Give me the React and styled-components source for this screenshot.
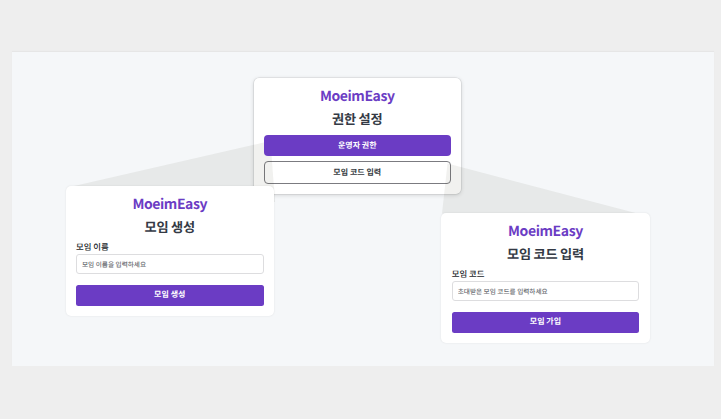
import React from 'react';
import styled, { createGlobalStyle } from 'styled-components';

const GlobalStyle = createGlobalStyle`
  *, *::before, *::after { box-sizing: border-box; }
  body {
    margin: 0;
    background: #eeeeee;
    font-family: "Noto Sans CJK KR", sans-serif;
    color: #343a40;
    text-rendering: geometricPrecision;
  }
`;

const Page = styled.main`
  height: 419px;
  padding: 51.5px 7px 53px 11.5px;
  overflow: hidden;
`;

const Canvas = styled.section`
  position: relative;
  height: 314.5px;
  background: #f5f7f9;
  box-shadow: 0 -1px 1px rgba(0, 0, 0, 0.03);
`;

const Card = styled.article`
  position: absolute;
  left: ${(p) => p.$x}px;
  top: ${(p) => p.$y}px;
  width: ${(p) => p.$w || 208.5}px;
  height: ${(p) => p.$h}px;
  display: flex;
  flex-direction: column;
  padding: 8px 10.5px 0;
  background: #fff;
  border-radius: 5px;
  box-shadow: ${(p) =>
    p.$raised
      ? '0 0 0 0.6px rgba(0, 0, 0, 0.1), 0 1px 4px rgba(0, 0, 0, 0.16)'
      : '0 0 2px rgba(0, 0, 0, 0.1)'};
`;

const Brand = styled.h1`
  margin: 0;
  text-align: center;
  font-size: 14px;
  font-weight: 700;
  line-height: 21px;
  letter-spacing: -0.42px;
  color: #6b3cc4;
`;

const Title = styled.h2`
  margin: 0;
  text-align: center;
  font-size: 13.2px;
  font-weight: 700;
  line-height: 24px;
  letter-spacing: -0.25px;
  color: #343a45;
`;

const Button = styled.button`
  position: relative;
  z-index: ${(p) => (p.$outline ? 0 : 2)};
  flex: none;
  height: ${(p) => (p.$outline ? 23 : 21)}px;
  margin: ${(p) => p.$gap}px 0 0;
  padding: 0;
  border: ${(p) => (p.$outline ? '1px solid #7b7b80' : '0')};
  border-radius: ${(p) => p.$radius || 2.5}px;
  background: ${(p) => (p.$outline ? 'transparent' : '#6b3cc4')};
  color: ${(p) => (p.$outline ? '#343a40' : '#fff')};
  font: 700 8px/18px "Noto Sans CJK KR", sans-serif;
  text-rendering: geometricPrecision;
`;

const Label = styled.label`
  font-size: 8.4px;
  font-weight: 500;
  line-height: 12px;
  margin-top: 2px;
  color: #212529;
`;

const Input = styled.input`
  flex: none;
  width: 100%;
  height: 20px;
  margin-top: 0.5px;
  padding: 0 5px;
  border: 1px solid #dddddf;
  border-radius: 3px;
  background: #fff;
  font: 500 6.65px/16px "Noto Sans CJK KR", sans-serif;
  text-rendering: geometricPrecision;
  &::placeholder { color: #6a6d72; opacity: 1; }
`;

const Beams = styled.svg`
  position: absolute;
  inset: 0;
  width: 702px;
  height: 315px;
  fill: rgba(50, 50, 35, 0.07);
`;

function FormCard({ x, y, title, label, placeholder, action }) {
  return (
    <Card $x={x} $y={y} $h={129.9}>
      <Brand>MoeimEasy</Brand>
      <Title>{title}</Title>
      <Label>{label}</Label>
      <Input placeholder={placeholder} />
      <Button $gap={11}>{action}</Button>
    </Card>
  );
}

export default function App() {
  return (
    <>
      <GlobalStyle />
      <Page>
        <Canvas>
          <Card $x={242} $y={26.5} $w={207.5} $h={115.5} $raised>
            <Brand>MoeimEasy</Brand>
            <Title>권한 설정</Title>
            <Button $gap={4} $radius={4}>운영자 권한</Button>
            <Button $gap={5} $radius={4} $outline>모임 코드 입력</Button>
          </Card>
          <Beams viewBox="0 0 702 315">
            <polygon points="62,134 258.5,89 263,150 62,150" />
            <polygon points="435.5,111.5 625.5,161.5 430,161.5" />
          </Beams>
          <FormCard x={54} y={134.5} title="모임 생성" label="모임 이름" placeholder="모임 이름을 입력하세요" action="모임 생성" />
          <FormCard x={429.7} y={161.5} title="모임 코드 입력" label="모임 코드" placeholder="초대받은 모임 코드를 입력하세요" action="모임 가입" />
        </Canvas>
      </Page>
    </>
  );
}
